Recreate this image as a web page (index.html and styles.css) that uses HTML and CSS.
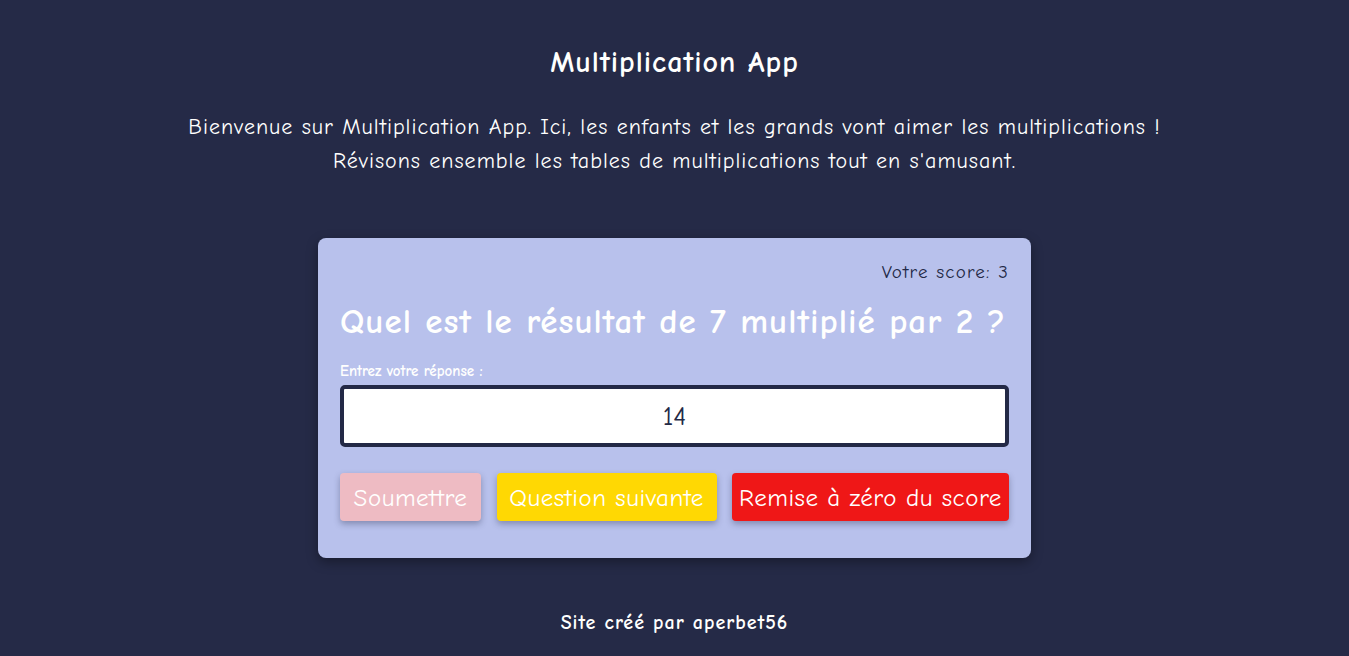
FILE: index.html
```html
<!DOCTYPE html>
<html lang="fr">
<head>
<meta charset="utf-8">
<title>Multiplication App</title>
<link rel="stylesheet" href="styles.css">
</head>
<body>
<header class="header">
  <h1 class="title">Multiplication App</h1>
  <p class="intro">Bienvenue sur Multiplication App. Ici, les enfants et les grands vont aimer les multiplications !<br>Révisons ensemble les tables de multiplications tout en s'amusant.</p>
</header>
<main class="main">
  <form class="card">
    <p class="score">Votre score: 3</p>
    <h2 class="question">Quel est le résultat de 7 multiplié par 2 ?</h2>
    <label class="label" for="answer">Entrez votre réponse :</label>
    <input class="input" id="answer" type="text" value="14">
    <div class="buttons">
      <button type="button" class="btn btn-submit">Soumettre</button>
      <button type="button" class="btn btn-next">Question suivante</button>
      <button type="button" class="btn btn-reset">Remise à zéro du score</button>
    </div>
  </form>
</main>
<footer class="footer">Site créé par aperbet56</footer>
</body>
</html>
```
FILE: styles.css
```css
* { box-sizing: border-box; }
html, body { height: 100%; }
body {
  margin: 0;
  background: #252a47;
  color: #fffffe;
  font-family: "Comic Sans MS", "Comic Neue", "Open Sans", sans-serif;
  display: flex;
  flex-direction: column;
  align-items: center;
}
.header {
  text-align: center;
  padding-top: 44px;
}
.title {
  margin: 0;
  font-size: 30px;
  font-weight: 700;
  line-height: 38px;
  letter-spacing: 1px;
}
.intro {
  margin: 28px 0 0;
  font-size: 22px;
  line-height: 34px;
  letter-spacing: 1px;
}
.main {
  margin-top: 60px;
}
.card {
  width: 713px;
  background: #b8c1ec;
  border-radius: 8px;
  padding: 20px 22px 37px;
  box-shadow: 0 4px 12px rgba(0, 0, 0, 0.35);
  display: flex;
  flex-direction: column;
}
.score {
  margin: 0;
  text-align: right;
  color: #232946;
  font-size: 19px;
  line-height: 28px;
  letter-spacing: 1.2px;
}
.question {
  margin: 14px 0 0;
  font-size: 35px;
  font-weight: 700;
  line-height: 44px;
  letter-spacing: 1px;
  color: #fffffe;
  white-space: nowrap;
}
.label {
  margin-top: 17px;
  font-size: 15px;
  font-weight: 700;
  line-height: 20px;
  color: #fffffe;
}
.input {
  margin-top: 4px;
  width: 100%;
  height: 62px;
  border: 4px solid #232946;
  border-radius: 5px;
  background: #fff;
  color: #232946;
  font-family: inherit;
  font-size: 27px;
  text-align: center;
  outline: none;
}
.buttons {
  display: flex;
  justify-content: space-between;
  gap: 15px;
  margin-top: 26px;
}
.btn {
  height: 48px;
  border: none;
  border-radius: 4px;
  padding: 0;
  font-family: inherit;
  font-size: 25px;
  letter-spacing: 0.5px;
  color: #fffffe;
  box-shadow: 0 3px 6px rgba(35, 41, 70, 0.35);
  cursor: pointer;
  white-space: nowrap;
}
.btn-submit { background: #eebbc3; flex: 0 0 141px; }
.btn-next { background: #ffd803; flex: 0 0 220px; }
.btn-reset { background: #ef1717; flex: 0 0 277px; }
.footer {
  margin-top: auto;
  padding-bottom: 22px;
  font-size: 20px;
  font-weight: 700;
  letter-spacing: 1px;
  text-align: center;
}
```
